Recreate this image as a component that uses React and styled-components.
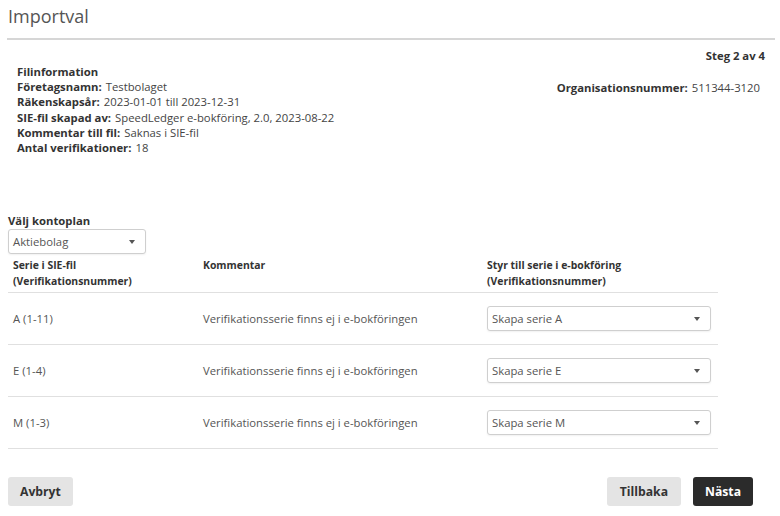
import React from 'react';
import styled, { createGlobalStyle } from 'styled-components';

const GlobalStyle = createGlobalStyle`
  body {
    margin: 0;
    background: #fff;
    font-family: "Open Sans", "Liberation Sans", sans-serif;
    font-size: 11.3px;
    color: #444;
  }
`

const Page = styled.div`
  width: 780px;
  height: 516px;
  padding: 0 5px 0 7px;
  box-sizing: border-box;
  display: flex;
  flex-direction: column;
`
const Title = styled.h1`
  margin: 0;
  padding: 4px 0 10px 1px;
  font-size: 18px;
  font-weight: 400;
  line-height: 24px;
  color: #555;
  border-bottom: 2px solid #d6d6d6;
`
const Step = styled.div`
  text-align: right;
  font-weight: 700;
  color: #333;
  line-height: 16px;
  padding: 8px 10px 0 0;
`
const InfoRow = styled.div`
  display: flex;
  justify-content: space-between;
  align-items: flex-start;
  padding: 0 15px 0 10px;
`
const InfoList = styled.div`
  line-height: 15.2px;
`
const InfoHead = styled.div`
  font-weight: 700;
  color: #333;
`
const InfoLine = styled.div`
  margin-top: ${props => props.Offset || 0}px;
  > b {
    color: #333;
    margin-right: 4px;
  }
`
const PlanLabel = styled.div`
  margin-top: 58px;
  padding-left: 1px;
  font-weight: 700;
  color: #333;
  line-height: 16px;
`
const SelectBox = styled.div`
  box-sizing: border-box;
  width: ${props => props.Width}px;
  height: 25px;
  border: 1px solid #cfcfcf;
  border-radius: 3px;
  box-shadow: 0 1px 2px rgba(0, 0, 0, 0.06);
  display: flex;
  align-items: center;
  justify-content: space-between;
  padding: 0 10px 0 4px;
  color: #555;
  background: #fff;
  line-height: 16px;
`
const Caret = styled.span`
  width: 0;
  height: 0;
  border-left: 3px solid transparent;
  border-right: 3px solid transparent;
  border-top: 4px solid #555;
`
const PlanSelect = styled.div`
  margin: 0 0 0 1px;
`
const Table = styled.div`
  width: 710px;
  margin-left: 1px;
  margin-top: 3px;
`
const Row = styled.div`
  display: grid;
  grid-template-columns: 195px 284px 231px;
  align-items: center;
  border-bottom: 1px solid #e0e0e0;
  padding: ${props => props.Head ? '0 0 3px' : '13px 0'};
  ${props => props.Head && `
    align-items: start;
    font-weight: 700;
    font-size: 10.4px;
    color: #333;
  `}
  line-height: 16px;
  > div:first-child {
    padding-left: 5px;
  }
`
const Cell = styled.div`
  color: #555;
`
const Footer = styled.div`
  margin-top: auto;
  margin-bottom: 10px;
  display: flex;
  align-items: center;
  padding: 0 22px 0 1px;
  gap: 12px;
`
const Spacer = styled.div`
  flex: 1;
`
const Button = styled.button`
  height: 29px;
  padding: 0 ${props => props.Pad || 12}px;
  border: none;
  border-radius: 3px;
  font-family: inherit;
  font-size: 12.2px;
  font-weight: 700;
  background: ${props => props.Primary ? '#2b2b2b' : '#e4e4e4'};
  color: ${props => props.Primary ? '#fff' : '#333'};
`

const series = [
  { id: 'A', range: '1-11' },
  { id: 'E', range: '1-4' },
  { id: 'M', range: '1-3' },
];

const App = () => {
  return (
    <Page>
      <GlobalStyle />
      <Title>Importval</Title>
      <Step>Steg 2 av 4</Step>
      <InfoRow>
        <InfoList>
          <InfoHead>Filinformation</InfoHead>
          <InfoLine><b>Företagsnamn:</b>Testbolaget</InfoLine>
          <InfoLine><b>Räkenskapsår:</b>2023-01-01 till 2023-12-31</InfoLine>
          <InfoLine><b>SIE-fil skapad av:</b>SpeedLedger e-bokföring, 2.0, 2023-08-22</InfoLine>
          <InfoLine><b>Kommentar till fil:</b>Saknas i SIE-fil</InfoLine>
          <InfoLine><b>Antal verifikationer:</b>18</InfoLine>
        </InfoList>
        <InfoList>
          <InfoLine Offset={16}><b>Organisationsnummer:</b>511344-3120</InfoLine>
        </InfoList>
      </InfoRow>
      <PlanLabel>Välj kontoplan</PlanLabel>
      <PlanSelect>
        <SelectBox Width={138}>
          <span>Aktiebolag</span>
          <Caret />
        </SelectBox>
      </PlanSelect>
      <Table>
        <Row Head>
          <div>Serie i SIE-fil<br />(Verifikationsnummer)</div>
          <div>Kommentar</div>
          <div>Styr till serie i e-bokföring<br />(Verifikationsnummer)</div>
        </Row>
        {series.map(s => (
          <Row key={s.id}>
            <Cell>{s.id} ({s.range})</Cell>
            <Cell>Verifikationsserie finns ej i e-bokföringen</Cell>
            <SelectBox Width={224}>
              <span>Skapa serie {s.id}</span>
              <Caret />
            </SelectBox>
          </Row>
        ))}
      </Table>
      <Footer>
        <Button Pad={12}>Avbryt</Button>
        <Spacer />
        <Button Pad={13}>Tillbaka</Button>
        <Button Primary Pad={12}>Nästa</Button>
      </Footer>
    </Page>
  );
}

export default App;
